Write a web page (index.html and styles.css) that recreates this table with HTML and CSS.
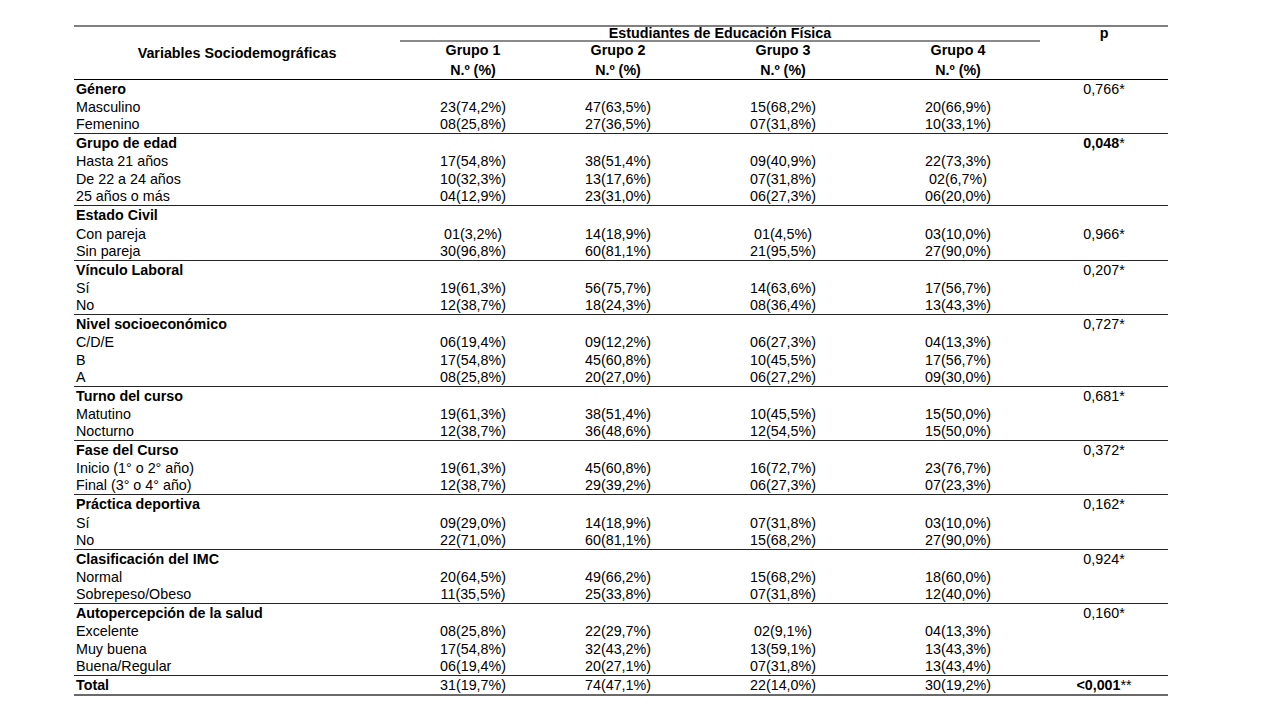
FILE: index.html
```html
<!DOCTYPE html>
<html lang="es">
<head>
<meta charset="utf-8">
<title>Variables Sociodemográficas</title>
<link rel="stylesheet" href="styles.css">
</head>
<body>
<div class="page">
<table class="data">
<colgroup>
<col class="c-lbl"><col class="c-g1"><col class="c-g2"><col class="c-g3"><col class="c-g4"><col class="c-p">
</colgroup>
<thead>
<tr class="h-top">
<th class="h-var" rowspan="3">Variables Sociodemográficas</th>
<th class="h-est" colspan="4">Estudiantes de Educación Física</th>
<th class="h-p" rowspan="3">p</th>
</tr>
<tr class="h-grp">
<th>Grupo 1</th><th>Grupo 2</th><th>Grupo 3</th><th>Grupo 4</th>
</tr>
<tr class="h-n">
<th>N.º (%)</th><th>N.º (%)</th><th>N.º (%)</th><th>N.º (%)</th>
</tr>
</thead>
<tbody>
<tr class="grp"><td class="lbl">Género</td><td></td><td></td><td></td><td></td><td>0,766*</td></tr>
<tr><td class="lbl">Masculino</td><td>23(74,2%)</td><td>47(63,5%)</td><td>15(68,2%)</td><td>20(66,9%)</td><td></td></tr>
<tr class="end"><td class="lbl">Femenino</td><td>08(25,8%)</td><td>27(36,5%)</td><td>07(31,8%)</td><td>10(33,1%)</td><td></td></tr>

<tr class="grp"><td class="lbl">Grupo de edad</td><td></td><td></td><td></td><td></td><td><b>0,048</b>*</td></tr>
<tr><td class="lbl">Hasta 21 años</td><td>17(54,8%)</td><td>38(51,4%)</td><td>09(40,9%)</td><td>22(73,3%)</td><td></td></tr>
<tr><td class="lbl">De 22 a 24 años</td><td>10(32,3%)</td><td>13(17,6%)</td><td>07(31,8%)</td><td>02(6,7%)</td><td></td></tr>
<tr class="end"><td class="lbl">25 años o más</td><td>04(12,9%)</td><td>23(31,0%)</td><td>06(27,3%)</td><td>06(20,0%)</td><td></td></tr>

<tr class="grp"><td class="lbl">Estado Civil</td><td></td><td></td><td></td><td></td><td></td></tr>
<tr><td class="lbl">Con pareja</td><td>01(3,2%)</td><td>14(18,9%)</td><td>01(4,5%)</td><td>03(10,0%)</td><td>0,966*</td></tr>
<tr class="end"><td class="lbl">Sin pareja</td><td>30(96,8%)</td><td>60(81,1%)</td><td>21(95,5%)</td><td>27(90,0%)</td><td></td></tr>

<tr class="grp"><td class="lbl">Vínculo Laboral</td><td></td><td></td><td></td><td></td><td>0,207*</td></tr>
<tr><td class="lbl">Sí</td><td>19(61,3%)</td><td>56(75,7%)</td><td>14(63,6%)</td><td>17(56,7%)</td><td></td></tr>
<tr class="end"><td class="lbl">No</td><td>12(38,7%)</td><td>18(24,3%)</td><td>08(36,4%)</td><td>13(43,3%)</td><td></td></tr>

<tr class="grp"><td class="lbl">Nivel socioeconómico</td><td></td><td></td><td></td><td></td><td>0,727*</td></tr>
<tr><td class="lbl">C/D/E</td><td>06(19,4%)</td><td>09(12,2%)</td><td>06(27,3%)</td><td>04(13,3%)</td><td></td></tr>
<tr><td class="lbl">B</td><td>17(54,8%)</td><td>45(60,8%)</td><td>10(45,5%)</td><td>17(56,7%)</td><td></td></tr>
<tr class="end"><td class="lbl">A</td><td>08(25,8%)</td><td>20(27,0%)</td><td>06(27,2%)</td><td>09(30,0%)</td><td></td></tr>

<tr class="grp"><td class="lbl">Turno del curso</td><td></td><td></td><td></td><td></td><td>0,681*</td></tr>
<tr><td class="lbl">Matutino</td><td>19(61,3%)</td><td>38(51,4%)</td><td>10(45,5%)</td><td>15(50,0%)</td><td></td></tr>
<tr class="end"><td class="lbl">Nocturno</td><td>12(38,7%)</td><td>36(48,6%)</td><td>12(54,5%)</td><td>15(50,0%)</td><td></td></tr>

<tr class="grp"><td class="lbl">Fase del Curso</td><td></td><td></td><td></td><td></td><td>0,372*</td></tr>
<tr><td class="lbl">Inicio (1° o 2° año)</td><td>19(61,3%)</td><td>45(60,8%)</td><td>16(72,7%)</td><td>23(76,7%)</td><td></td></tr>
<tr class="end"><td class="lbl">Final (3° o 4° año)</td><td>12(38,7%)</td><td>29(39,2%)</td><td>06(27,3%)</td><td>07(23,3%)</td><td></td></tr>

<tr class="grp"><td class="lbl">Práctica deportiva</td><td></td><td></td><td></td><td></td><td>0,162*</td></tr>
<tr><td class="lbl">Sí</td><td>09(29,0%)</td><td>14(18,9%)</td><td>07(31,8%)</td><td>03(10,0%)</td><td></td></tr>
<tr class="end"><td class="lbl">No</td><td>22(71,0%)</td><td>60(81,1%)</td><td>15(68,2%)</td><td>27(90,0%)</td><td></td></tr>

<tr class="grp"><td class="lbl">Clasificación del IMC</td><td></td><td></td><td></td><td></td><td>0,924*</td></tr>
<tr><td class="lbl">Normal</td><td>20(64,5%)</td><td>49(66,2%)</td><td>15(68,2%)</td><td>18(60,0%)</td><td></td></tr>
<tr class="end"><td class="lbl">Sobrepeso/Obeso</td><td>11(35,5%)</td><td>25(33,8%)</td><td>07(31,8%)</td><td>12(40,0%)</td><td></td></tr>

<tr class="grp"><td class="lbl">Autopercepción de la salud</td><td></td><td></td><td></td><td></td><td>0,160*</td></tr>
<tr><td class="lbl">Excelente</td><td>08(25,8%)</td><td>22(29,7%)</td><td>02(9,1%)</td><td>04(13,3%)</td><td></td></tr>
<tr><td class="lbl">Muy buena</td><td>17(54,8%)</td><td>32(43,2%)</td><td>13(59,1%)</td><td>13(43,3%)</td><td></td></tr>
<tr class="end"><td class="lbl">Buena/Regular</td><td>06(19,4%)</td><td>20(27,1%)</td><td>07(31,8%)</td><td>13(43,4%)</td><td></td></tr>

<tr class="grp total"><td class="lbl">Total</td><td>31(19,7%)</td><td>74(47,1%)</td><td>22(14,0%)</td><td>30(19,2%)</td><td><b>&lt;0,001</b>**</td></tr>
</tbody>
</table>
</div>
</body>
</html>
```

FILE: styles.css
```css
html, body {
  margin: 0;
  padding: 0;
  background: #ffffff;
}

body {
  font-family: "Liberation Sans", Arial, sans-serif;
  font-size: 14.3px;
  color: #000000;
}

.page {
  padding: 25px 0 0 74px;
}

.data {
  border-collapse: separate;
  border-spacing: 0;
  table-layout: fixed;
  width: 1094px;
  border-top: 2px solid #808080;
  border-bottom: 2px solid #6a6a6a;
}

.c-lbl { width: 326px; }
.c-g1 { width: 146px; }
.c-g2 { width: 144px; }
.c-g3 { width: 186px; }
.c-g4 { width: 164px; }
.c-p { width: 128px; }

.data th {
  font-weight: bold;
  padding: 0;
  text-align: center;
  white-space: nowrap;
}

.h-var {
  vertical-align: middle;
  line-height: 15px;
  padding-top: 2px;
  border-bottom: 1px solid #000000;
}

.h-est {
  vertical-align: top;
  padding-top: 4px;
  line-height: 13px;
  height: 13px;
  border-bottom: 2px solid #8a8a8a;
}

.h-p {
  vertical-align: top;
  padding-top: 1px;
  line-height: 13px;
  border-bottom: 1px solid #000000;
}

.h-grp th {
  line-height: 17px;
  height: 17px;
}

.h-n th {
  padding-top: 3px;
  line-height: 17px;
  height: 17px;
  border-bottom: 1px solid #000000;
}

.data td {
  padding: 0;
  height: 18.07px;
  line-height: 18.07px;
  text-align: center;
  vertical-align: middle;
  white-space: nowrap;
}

.data td.lbl {
  text-align: left;
  padding-left: 2px;
}

.grp td.lbl {
  font-weight: bold;
}

.end td {
  height: 17.07px;
  line-height: 17.07px;
  border-bottom: 1px solid #262626;
}
```
